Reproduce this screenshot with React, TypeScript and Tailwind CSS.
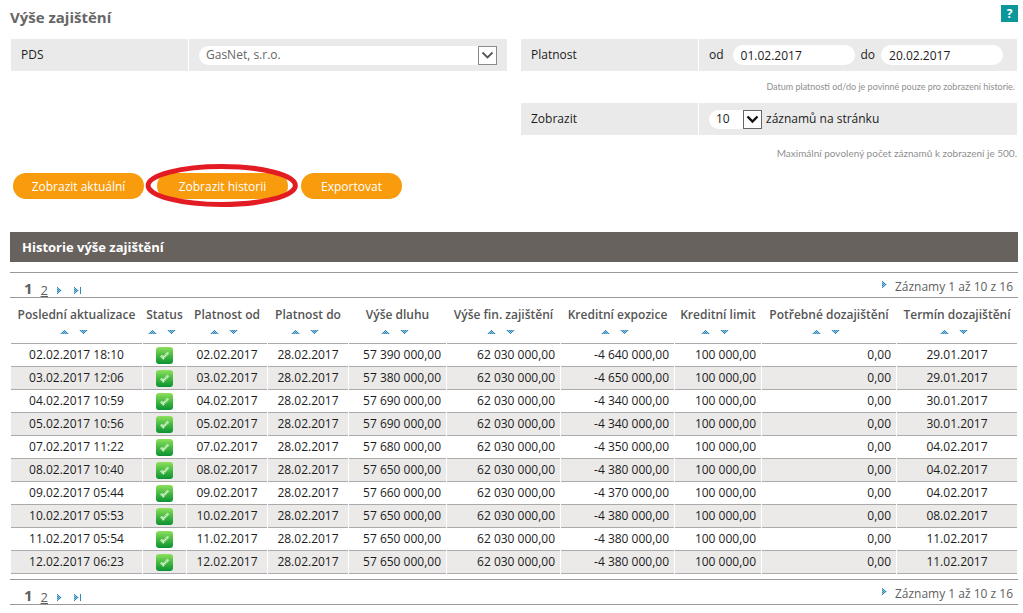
import clsx from 'clsx'

type Align = 'center' | 'right'

const columns: { name: string; width: string; align: Align }[] = [
  { name: 'Poslední aktualizace', width: 'w-[131px]', align: 'center' },
  { name: 'Status', width: 'w-[43px]', align: 'center' },
  { name: 'Platnost od', width: 'w-[80px]', align: 'center' },
  { name: 'Platnost do', width: 'w-[80px]', align: 'center' },
  { name: 'Výše dluhu', width: 'w-[97px]', align: 'right' },
  { name: 'Výše fin. zajištění', width: 'w-[113px]', align: 'right' },
  { name: 'Kreditní expozice', width: 'w-[113px]', align: 'right' },
  { name: 'Kreditní limit', width: 'w-[86px]', align: 'right' },
  { name: 'Potřebné dozajištění', width: 'w-[134px]', align: 'right' },
  { name: 'Termín dozajištění', width: 'w-[120px]', align: 'center' },
]

const rows = [
  { date: '02.02.2017', time: '18:10', debt: '57 390 000,00', exposure: '-4 640 000,00', due: '29.01.2017' },
  { date: '03.02.2017', time: '12:06', debt: '57 380 000,00', exposure: '-4 650 000,00', due: '29.01.2017' },
  { date: '04.02.2017', time: '10:59', debt: '57 690 000,00', exposure: '-4 340 000,00', due: '30.01.2017' },
  { date: '05.02.2017', time: '10:56', debt: '57 690 000,00', exposure: '-4 340 000,00', due: '30.01.2017' },
  { date: '07.02.2017', time: '11:22', debt: '57 680 000,00', exposure: '-4 350 000,00', due: '04.02.2017' },
  { date: '08.02.2017', time: '10:40', debt: '57 650 000,00', exposure: '-4 380 000,00', due: '04.02.2017' },
  { date: '09.02.2017', time: '05:44', debt: '57 660 000,00', exposure: '-4 370 000,00', due: '04.02.2017' },
  { date: '10.02.2017', time: '05:53', debt: '57 650 000,00', exposure: '-4 380 000,00', due: '08.02.2017' },
  { date: '11.02.2017', time: '05:54', debt: '57 650 000,00', exposure: '-4 380 000,00', due: '11.02.2017' },
  { date: '12.02.2017', time: '06:23', debt: '57 650 000,00', exposure: '-4 380 000,00', due: '11.02.2017' },
]

// Small dithered icons, one character per pixel
const UP = ['....#....', '...#.#...', '..#.#.#..', '.#.#.#.#.']
const DOWN = ['.#.#.#.#.', '..#.#.#..', '...#.#...', '....#....']
const NEXT = ['#.....', '.#....', '#.#...', '.#.#..', '#.#...', '.#....', '#.....']
const LAST = ['#.....#', '.#....#', '#.#...#', '.#.#..#', '#.#...#', '.#....#', '#.....#']

function PixelIcon({ pixels, tint }: { pixels: string[]; tint: string }) {
  return (
    <svg
      width={pixels[0].length}
      height={pixels.length}
      className="inline-block shrink-0"
      aria-hidden="true"
    >
      <polygon points={tint} fill="#8cc3e2" />
      {pixels.map((line, y) =>
        line.split('').map((c, x) =>
          c === '#' ? (
            <rect key={`${x}-${y}`} x={x} y={y} width="1" height="1" fill="#3487b5" />
          ) : null,
        ),
      )}
    </svg>
  )
}

function StatusIcon() {
  return (
    <svg width="17" height="17" viewBox="0 0 17 17" role="img" aria-label="OK" className="mx-auto block">
      <defs>
        <linearGradient id="ok" x1="0" y1="0" x2="0" y2="1">
          <stop offset="0" stopColor="#8ee05c" />
          <stop offset="0.5" stopColor="#46b940" />
          <stop offset="1" stopColor="#0b9233" />
        </linearGradient>
      </defs>
      <rect width="17" height="17" rx="3" fill="url(#ok)" />
      <path d="M5 8.6l2.2 2.3L12.4 5.4" fill="none" stroke="#d9f5d0" strokeWidth="2.6" strokeDasharray="1.1 0.4" />
    </svg>
  )
}

function SelectArrow({ strong }: { strong?: boolean }) {
  return (
    <svg
      width="19"
      height="19"
      viewBox="0 0 19 19"
      className="pointer-events-none absolute right-0 top-0"
      aria-hidden="true"
    >
      <rect x="0.5" y="0.5" width="18" height="18" fill="#fff" stroke={strong ? '#666' : '#8a8a8a'} />
      <path
        d="M4.5 6.5l5 5 5-5"
        fill="none"
        stroke={strong ? '#111' : '#555'}
        strokeWidth={strong ? 2.4 : 1.8}
      />
    </svg>
  )
}

function Field({ label, htmlFor, children }: { label: string; htmlFor: string; children: React.ReactNode }) {
  return (
    <div className="flex h-8 gap-px">
      <label htmlFor={htmlFor} className="flex w-[177px] shrink-0 items-center bg-[#eaeaea] px-[10px]">
        {label}
      </label>
      <div className="flex min-w-0 flex-1 items-center bg-[#eaeaea] px-[10px]">{children}</div>
    </div>
  )
}

function Pager() {
  return (
    <div className="flex h-[26px] items-end justify-between border-y border-[#999] pl-[14px] pr-[5px] text-[#5f5f5f]">
      <nav className="flex items-end gap-2 leading-[18px]">
        <span className="text-[15px] font-bold">1</span>
        <a href="#" className="text-[13px] leading-[14px] underline">2</a>
        <a href="#" aria-label="Další" className="ml-px flex h-[10px] items-start">
          <PixelIcon pixels={NEXT} tint="0,0 5,3.5 0,7" />
        </a>
        <a href="#" aria-label="Poslední" className="ml-[3px] flex h-[10px] items-start">
          <PixelIcon pixels={LAST} tint="0,0 5,3.5 0,7" />
        </a>
      </nav>
      <p className="flex h-5 items-start gap-[7px] leading-5">
        <span className="flex pt-1">
          <PixelIcon pixels={NEXT} tint="0,0 5,3.5 0,7" />
        </span>
        Záznamy 1 až 10 z 16
      </p>
    </div>
  )
}

function Button({ className, children }: { className: string; children: React.ReactNode }) {
  return (
    <button
      type="button"
      className={clsx('h-[26px] rounded-full bg-[#f89c0e] pt-px whitespace-nowrap text-white', className)}
    >
      {children}
    </button>
  )
}

const hintClass = "text-right font-['Lato',sans-serif] text-[#8f8f8f]"
const inputClass = 'h-5 min-w-0 flex-1 rounded-full bg-white px-2 outline-none'

function App() {
  return (
    <main className="bg-white pb-2 pl-[10px] pr-[5px] font-['Open_Sans',sans-serif] text-[12px] leading-4 text-[#1c1c1c]">
      <header className="flex h-[39px] items-start justify-between pt-[5px]">
        <h1 className="text-[15px] font-bold leading-6 text-[#666]">Výše zajištění</h1>
        <button type="button" className="size-[17px] bg-[#0c979b] font-bold leading-4 text-white">?</button>
      </header>

      <form className="px-px">
        <div className="grid grid-cols-2 gap-x-[14px]">
          <Field label="PDS" htmlFor="pds">
            <div className="relative flex h-[19px] w-full">
              <select id="pds" className="w-full appearance-none rounded-l-full bg-white px-[7px] text-[#666] outline-none">
                <option>GasNet, s.r.o.</option>
              </select>
              <SelectArrow />
            </div>
          </Field>

          <div>
            <Field label="Platnost" htmlFor="from">
              <label htmlFor="from" className="mr-[9px]">od</label>
              <div className="flex min-w-0 flex-1 items-center pr-1">
                <input id="from" className={inputClass} defaultValue="01.02.2017" />
                <label htmlFor="to" className="mx-[6px]">do</label>
                <input id="to" className={inputClass} defaultValue="20.02.2017" />
              </div>
            </Field>
            <p className={clsx(hintClass, 'h-8 pt-2 pr-[2px] text-[9px]')}>
              Datum platnosti od/do je povinné pouze pro zobrazení historie.
            </p>
            <Field label="Zobrazit" htmlFor="count">
              <div className="relative mr-[4px] flex h-[19px] w-[53px]">
                <select id="count" className="w-full appearance-none rounded-l-full bg-white px-[7px] outline-none">
                  <option>10</option>
                </select>
                <SelectArrow strong />
              </div>
              <span>záznamů na stránku</span>
            </Field>
            <p className={clsx(hintClass, 'h-[38px] pt-[10px] text-[10px]')}>
              Maximální povolený počet záznamů k zobrazení je 500.
            </p>
          </div>
        </div>

        <div className="flex gap-[13px] pl-[2px]">
          <Button className="w-[131px]">Zobrazit aktuální</Button>
          <div className="relative">
            <Button className="w-[131px]">Zobrazit historii</Button>
            <svg
              className="pointer-events-none absolute -left-3 -top-[10px] h-[45px] w-[calc(100%+24px)] overflow-visible"
              aria-hidden="true"
            >
              <ellipse cx="49.5%" cy="50%" rx="47.5%" ry="19" fill="none" stroke="#e31b23" strokeWidth="5" />
            </svg>
          </div>
          <Button className="w-[101px]">Exportovat</Button>
        </div>
      </form>

      <h2 className="mt-[33px] mb-[10px] h-[30px] bg-[#68625e] px-3 text-[13px] font-bold leading-[30px] text-white">
        Historie výše zajištění
      </h2>

      <Pager />

      <table className="w-full table-fixed border-separate border-spacing-x-px border-spacing-y-0">
        <thead>
          <tr>
            {columns.map((col) => (
              <th
                key={col.name}
                className={clsx(
                  col.width,
                  'h-[46px] border-b border-[#aaa] p-0 pt-[9px] align-top font-semibold text-[#555]',
                )}
              >
                <div className="flex flex-col items-center whitespace-nowrap">
                  {col.name}
                  <span className="mt-[7px] mr-[6px] flex gap-[10px]">
                    <PixelIcon pixels={UP} tint="0,4 4.5,0 9,4" />
                    <PixelIcon pixels={DOWN} tint="0,0 4.5,4 9,0" />
                  </span>
                </div>
              </th>
            ))}
          </tr>
        </thead>
        <tbody>
          {rows.map((row) => {
            const cells = [
              `${row.date} ${row.time}`,
              <StatusIcon key="status" />,
              row.date,
              '28.02.2017',
              row.debt,
              '62 030 000,00',
              row.exposure,
              '100 000,00',
              '0,00',
              row.due,
            ]
            return (
              <tr key={row.date} className="even:bg-[#ebeae9]">
                {cells.map((cell, i) => (
                  <td
                    key={i}
                    className={clsx(
                      'h-[23px] border-b border-[#aaa] p-0 leading-[18px] whitespace-nowrap',
                      columns[i].align === 'right' ? 'pr-[5px] text-right' : 'text-center',
                    )}
                  >
                    {cell}
                  </td>
                ))}
              </tr>
            )
          })}
        </tbody>
      </table>

      <div className="mt-[5px]">
        <Pager />
      </div>
    </main>
  )
}

export default App
